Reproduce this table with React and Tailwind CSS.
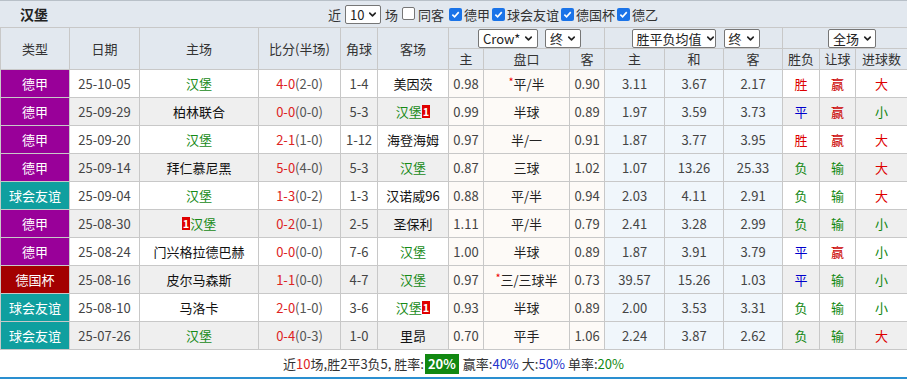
import React from 'react';
import { ChevronDown } from 'lucide-react';

const typeColors = {
  德甲: 'bg-[#990099]',
  球会友谊: 'bg-[#0f9f9f]',
  德国杯: 'bg-[#a30000]',
};

const rows = [
  { type: '德甲', date: '25-10-05', home: '汉堡', score: '4-0', half: '(2-0)', corner: '1-4', away: '美因茨', h: '0.98', pan: '平/半', star: true, a: '0.90', w: '3.11', d: '3.67', l: '2.17', res: '胜', rang: '赢', goal: '大' },
  { type: '德甲', date: '25-09-29', home: '柏林联合', score: '0-0', half: '(0-0)', corner: '5-3', away: '汉堡', awayRed: true, h: '0.99', pan: '半球', a: '0.89', w: '1.97', d: '3.59', l: '3.73', res: '平', rang: '赢', goal: '小' },
  { type: '德甲', date: '25-09-20', home: '汉堡', score: '2-1', half: '(1-0)', corner: '1-12', away: '海登海姆', h: '0.97', pan: '半/一', a: '0.91', w: '1.87', d: '3.77', l: '3.95', res: '胜', rang: '赢', goal: '大' },
  { type: '德甲', date: '25-09-14', home: '拜仁慕尼黑', score: '5-0', half: '(4-0)', corner: '5-3', away: '汉堡', h: '0.87', pan: '三球', a: '1.02', w: '1.07', d: '13.26', l: '25.33', res: '负', rang: '输', goal: '大' },
  { type: '球会友谊', date: '25-09-04', home: '汉堡', score: '1-3', half: '(0-2)', corner: '1-3', away: '汉诺威96', h: '0.88', pan: '平/半', a: '0.94', w: '2.03', d: '4.11', l: '2.91', res: '负', rang: '输', goal: '大' },
  { type: '德甲', date: '25-08-30', home: '汉堡', homeRed: true, score: '0-2', half: '(0-1)', corner: '2-5', away: '圣保利', h: '1.11', pan: '平/半', a: '0.79', w: '2.41', d: '3.28', l: '2.99', res: '负', rang: '输', goal: '小' },
  { type: '德甲', date: '25-08-24', home: '门兴格拉德巴赫', score: '0-0', half: '(0-0)', corner: '7-6', away: '汉堡', h: '1.00', pan: '半球', a: '0.89', w: '1.87', d: '3.91', l: '3.79', res: '平', rang: '赢', goal: '小' },
  { type: '德国杯', date: '25-08-16', home: '皮尔马森斯', score: '1-1', half: '(0-0)', corner: '4-7', away: '汉堡', h: '0.97', pan: '三/三球半', star: true, a: '0.73', w: '39.57', d: '15.26', l: '1.03', res: '平', rang: '输', goal: '小' },
  { type: '球会友谊', date: '25-08-10', home: '马洛卡', score: '2-0', half: '(1-0)', corner: '3-6', away: '汉堡', awayRed: true, h: '0.93', pan: '半球', a: '0.89', w: '2.00', d: '3.53', l: '3.31', res: '负', rang: '输', goal: '小' },
  { type: '球会友谊', date: '25-07-26', home: '汉堡', score: '0-4', half: '(0-3)', corner: '1-0', away: '里昂', h: '0.70', pan: '平手', a: '1.06', w: '2.24', d: '3.87', l: '2.62', res: '负', rang: '输', goal: '大' },
];

const resColor = { 胜: 'text-[#dd0000]', 平: 'text-[#0000cc]', 负: 'text-[#118811]' };
const rangColor = { 赢: 'text-[#cc0000]', 输: 'text-[#118811]' };
const goalColor = { 大: 'text-[#dd0000]', 小: 'text-[#118811]' };

const RedCard = () => (
  <span className="inline-block bg-[#e00000] text-white font-bold text-[11px] leading-[13px] px-[1px] align-[1px]">1</span>
);

const Team = ({ name, red, redFirst }) => (
  <span className={name === '汉堡' ? 'text-[#178a17]' : 'text-[#111]'}>
    {redFirst && <RedCard />}
    {name}
    {red && <RedCard />}
  </span>
);

const Select = ({ label, w }) => (
  <span className={`inline-flex items-center justify-between whitespace-nowrap h-[19px] border border-[#767676] rounded-[2px] bg-white pl-[4px] pr-[3px] text-[13px] leading-none text-[#222] ${w}`}>
    {label}
    <ChevronDown size={11} strokeWidth={3.5} className="ml-[3px] shrink-0" />
  </span>
);

const Check = ({ on }) => (
  <span className={`inline-flex items-center justify-center w-[13px] h-[13px] rounded-[2px] mx-[2px] ${on ? 'bg-[#1a73e8]' : 'border border-[#767676] bg-white'}`}>
    {on && (
      <svg width="9" height="9" viewBox="0 0 10 10">
        <path d="M1.5 5.2 L4 7.6 L8.6 2.4" stroke="white" strokeWidth="1.8" fill="none" />
      </svg>
    )}
  </span>
);

const th = 'border border-[#c8c8c8] font-normal text-[#333] text-center p-0';
const td = 'border border-[#c8c8c8] text-center h-[28px] p-0 whitespace-nowrap';

export default function App() {
  return (
    <div className="w-[907px] h-[379px] overflow-hidden bg-white text-[13px] font-['Microsoft_YaHei','Noto_Sans_CJK_SC',sans-serif]">
      <div className="h-[27px] bg-[#e2e8ef] border-t border-[#b8c0c8] flex items-center">
        <span className="ml-[20px] w-[28px] font-bold text-[14px] text-[#222]">汉堡</span>
        <div className="ml-[280px] flex items-center text-[#333] pt-[1px] whitespace-nowrap">
          <span>近</span>
          <span className="ml-[4px]"><Select label="10" w="w-[36px]" /></span>
          <span className="ml-[4px]">场</span>
          <span className="ml-[2px]"><Check /></span>
          <span className="ml-[1px] mr-[3px]">同客</span>
          <Check on /><span>德甲</span>
          <Check on /><span>球会友谊</span>
          <Check on /><span>德国杯</span>
          <Check on /><span>德乙</span>
        </div>
      </div>
      <table className="table-fixed border-collapse w-[907px]">
        <colgroup>
          {[69, 70, 119, 82, 37, 71, 35, 86, 35, 60, 59, 59, 37, 36, 52].map((w, i) => (
            <col key={i} style={{ width: w }} />
          ))}
        </colgroup>
        <thead className="bg-[#e2e8ef]">
          <tr className="h-[21px]">
            <th rowSpan={2} className={th}>类型</th>
            <th rowSpan={2} className={th}>日期</th>
            <th rowSpan={2} className={th}>主场</th>
            <th rowSpan={2} className={th}>比分(半场)</th>
            <th rowSpan={2} className={th}>角球</th>
            <th rowSpan={2} className={th}>客场</th>
            <th colSpan={3} className={th}>
              <div className="flex justify-center gap-[7px] pl-[6px]">
                <Select label="Crow*" w="w-[60px]" />
                <Select label="终" w="w-[36px]" />
              </div>
            </th>
            <th colSpan={3} className={th}>
              <div className="flex justify-center gap-[8px] pl-[4px]">
                <Select label="胜平负均值" w="w-[84px]" />
                <Select label="终" w="w-[36px]" />
              </div>
            </th>
            <th colSpan={3} className={th}>
              <div className="flex justify-center pl-[14px]">
                <Select label="全场" w="w-[48px]" />
              </div>
            </th>
          </tr>
          <tr className="h-[21px]">
            {['主', '盘口', '客', '主', '和', '客', '胜负', '让球', '进球数'].map((t, i) => (
              <th key={i} className={th}>{t}</th>
            ))}
          </tr>
        </thead>
        <tbody>
          {rows.map((r, i) => {
            const bg = i % 2 === 1 ? 'bg-[#efefef]' : 'bg-white';
            return (
              <tr key={i}>
                <td className={`${td} ${typeColors[r.type]} text-white`}>{r.type}</td>
                <td className={`${td} ${bg} text-[#444]`}>{r.date}</td>
                <td className={`${td} ${bg}`}><Team name={r.home} redFirst={r.homeRed} /></td>
                <td className={`${td} ${bg} text-[#555]`}>
                  <span className="text-[#dd2222]">{r.score}</span>{r.half}
                </td>
                <td className={`${td} ${bg} text-[#444]`}>{r.corner}</td>
                <td className={`${td} ${bg}`}><Team name={r.away} red={r.awayRed} /></td>
                <td className={`${td} bg-[#fdfaf7] text-[#444]`}>{r.h}</td>
                <td className={`${td} bg-[#fdfaf7] text-[#222]`}>
                  {r.star && <span className="text-[#e00] text-[11px] align-[3px]">*</span>}
                  {r.pan}
                </td>
                <td className={`${td} bg-[#fdfaf7] text-[#444]`}>{r.a}</td>
                <td className={`${td} bg-[#f0f6fb] text-[#444]`}>{r.w}</td>
                <td className={`${td} bg-[#f0f6fb] text-[#444]`}>{r.d}</td>
                <td className={`${td} bg-[#f0f6fb] text-[#444]`}>{r.l}</td>
                <td className={`${td} ${bg} ${resColor[r.res]}`}>{r.res}</td>
                <td className={`${td} ${bg} ${rangColor[r.rang]}`}>{r.rang}</td>
                <td className={`${td} ${bg} ${goalColor[r.goal]}`}>{r.goal}</td>
              </tr>
            );
          })}
        </tbody>
      </table>
      <div className="h-[27px] flex items-center justify-center text-[#333]">
        <span>近</span>
        <span className="text-[#dd2222]">10</span>
        <span>场,胜2平3负5, 胜率:</span>
        <span className="bg-[#118811] text-white font-bold px-[3px] leading-[20px] mx-[1px]">20%</span>
        <span className="ml-[3px]">赢率:</span>
        <span className="text-[#2233cc]">40%</span>
        <span className="ml-[3px]">大:</span>
        <span className="text-[#2233cc]">50%</span>
        <span className="ml-[3px]">单率:</span>
        <span className="text-[#118811]">20%</span>
      </div>
      <div className="h-[3px] bg-[#2a8fd0]" />
    </div>
  );
}
